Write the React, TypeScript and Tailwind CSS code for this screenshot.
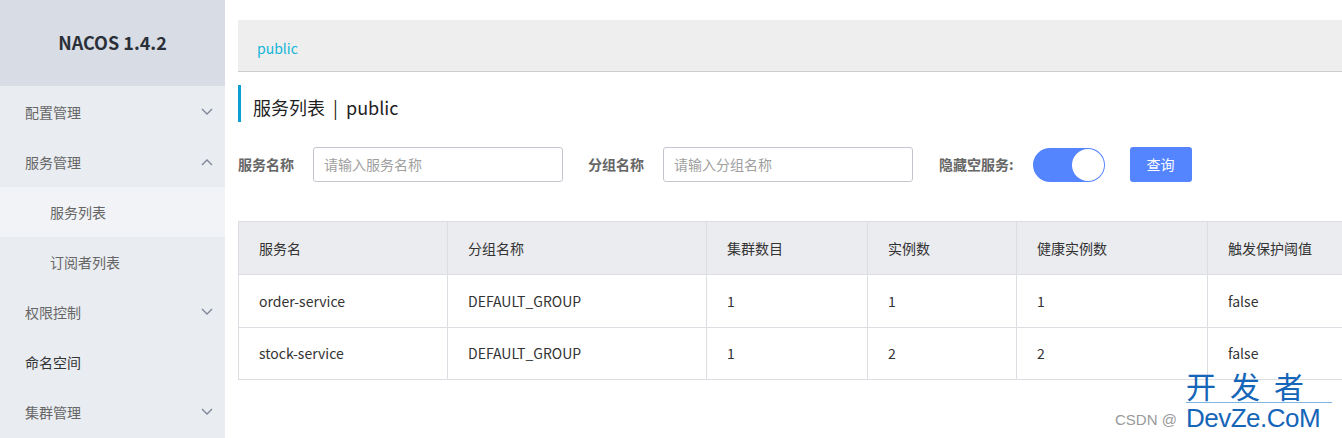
import React from 'react';

const font = { fontFamily: '"Noto Sans CJK SC", "Noto Sans", sans-serif' };

const Chevron = ({ up }: { up?: boolean }) => (
  <svg width="12" height="8" viewBox="0 0 12 8" className="text-[#7b8595]">
    <path
      d={up ? 'M1 7 L6 2 L11 7' : 'M1 1 L6 6 L11 1'}
      fill="none"
      stroke="currentColor"
      strokeWidth="1.3"
    />
  </svg>
);

const menu: { label: string; sub?: boolean; active?: boolean; dark?: boolean; chevron?: 'up' | 'down' }[] = [
  { label: '配置管理', chevron: 'down' },
  { label: '服务管理', chevron: 'up' },
  { label: '服务列表', sub: true, active: true },
  { label: '订阅者列表', sub: true },
  { label: '权限控制', chevron: 'down' },
  { label: '命名空间', dark: true },
  { label: '集群管理', chevron: 'down' },
];

const columns = [
  { title: '服务名', w: 'w-[208px]' },
  { title: '分组名称', w: 'w-[259px]' },
  { title: '集群数目', w: 'w-[161px]' },
  { title: '实例数', w: 'w-[149px]' },
  { title: '健康实例数', w: 'w-[191px]' },
  { title: '触发保护阈值', w: 'w-[160px]' },
];

const rows = [
  ['order-service', 'DEFAULT_GROUP', '1', '1', '1', 'false'],
  ['stock-service', 'DEFAULT_GROUP', '1', '2', '2', 'false'],
];

export default function App() {
  return (
    <div className="relative flex w-[1342px] h-[438px] overflow-hidden bg-white text-[14px]" style={font}>
      {/* Sidebar */}
      <aside className="w-[225px] shrink-0 flex flex-col bg-[#e9ecf1]">
        <div className="h-[86px] bg-[#d8dce4] flex items-center justify-center pb-[2px]">
          <span className="text-[18px] font-bold text-[#2a2f38]">NACOS 1.4.2</span>
        </div>
        <nav className="flex flex-col pt-[1px]">
          {menu.map(m => (
            <div
              key={m.label}
              className={`h-[50px] flex items-center justify-between pr-[12px] ${m.sub ? 'pl-[50px]' : 'pl-[25px]'} ${
                m.active ? 'bg-[#f1f3f7]' : ''
              }`}
            >
              <span className={m.dark ? 'text-[#333]' : 'text-[#666]'}>{m.label}</span>
              {m.chevron && <Chevron up={m.chevron === 'up'} />}
            </div>
          ))}
        </nav>
      </aside>

      {/* Main */}
      <main className="flex-1 pt-[20px] pl-[13px]">
        <div className="h-[52px] bg-[#eeeeee] border-b border-[#cccccc] flex items-center pl-[19px] pt-[5px]">
          <span className="text-[#12b5d6]">public</span>
        </div>

        <div className="mt-[13px] h-[37px] border-l-[3px] border-[#0c9fd1] flex items-center pl-[12px] pt-[8px]">
          <span className="text-[18px] text-[#1f1f1f]">服务列表&nbsp;&nbsp;|&nbsp;&nbsp;public</span>
        </div>

        <div className="mt-[25px] flex items-center h-[35px]">
          <span className="font-bold text-[#666] w-[75px]">服务名称</span>
          <div className="w-[250px] h-[35px] border border-[#c4c6cf] rounded-[3px] flex items-center pl-[10px] text-[#a0a0a0]">
            请输入服务名称
          </div>
          <span className="font-bold text-[#666] ml-[25px] w-[75px]">分组名称</span>
          <div className="w-[250px] h-[35px] border border-[#c4c6cf] rounded-[3px] flex items-center pl-[10px] text-[#a0a0a0]">
            请输入分组名称
          </div>
          <span className="font-bold text-[#666] ml-[26px]">隐藏空服务:</span>
          <div className="ml-[19px] w-[72px] h-[34px] rounded-full bg-[#5584ff] flex items-center justify-end pr-[1px]">
            <div className="w-[32px] h-[32px] rounded-full bg-white" />
          </div>
          <div className="ml-[25px] w-[62px] h-[35px] rounded-[3px] bg-[#5584ff] text-white flex items-center justify-center">
            查询
          </div>
        </div>

        <div className="mt-[39px] w-[1160px] border border-[#dcdee3]">
          <div className="flex h-[53px] bg-[#ebecf0] border-b border-[#dcdee3]">
            {columns.map((c, i) => (
              <div
                key={c.title}
                className={`${c.w} shrink-0 flex items-center pl-[20px] text-[#333] ${i > 0 ? 'border-l border-[#dcdee3]' : ''}`}
              >
                {c.title}
              </div>
            ))}
          </div>
          {rows.map((r, ri) => (
            <div key={ri} className={`flex h-[52px] ${ri > 0 ? 'border-t border-[#dcdee3]' : ''}`}>
              {r.map((v, i) => (
                <div
                  key={i}
                  className={`${columns[i].w} shrink-0 flex items-center pl-[20px] text-[#333] ${i > 0 ? 'border-l border-[#dcdee3]' : ''}`}
                >
                  {v}
                </div>
              ))}
            </div>
          ))}
        </div>
      </main>

      {/* Watermark */}
      <div
        className="absolute left-[1115px] top-[409px] text-[15px] text-[#9a9a9a]"
        style={{ fontFamily: '"Liberation Sans", "Noto Sans CJK SC", sans-serif' }}
      >
        CSDN @
      </div>
      <div className="absolute left-[1186px] top-[368px] w-[146px] flex flex-col items-stretch">
        <div className="text-[30px] leading-[34px] text-[#1565b8] tracking-[14px] border-b border-[#7fb6e6]">开发者</div>
        <div
          className="text-[26px] leading-[30px] text-[#1565b8] tracking-[-0.5px] bg-white/60"
          style={{ fontFamily: '"Liberation Sans", sans-serif' }}
        >
          DevZe.CoM
        </div>
      </div>
    </div>
  );
}
